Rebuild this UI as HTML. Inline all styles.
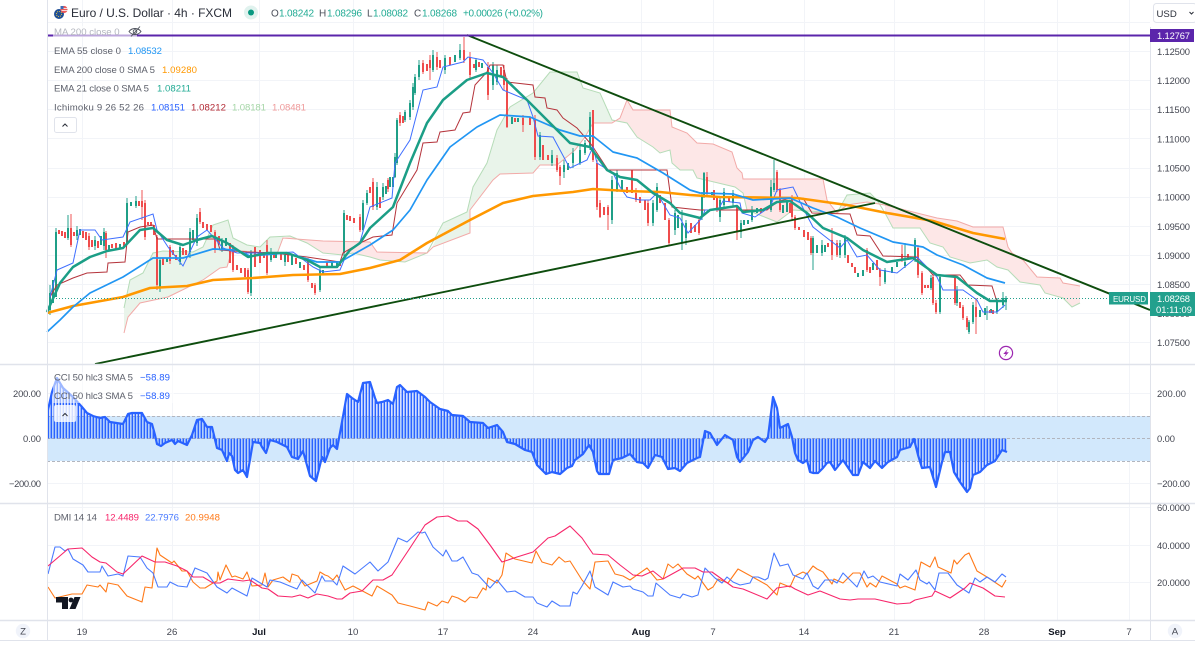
<!DOCTYPE html>
<html lang="en"><head><meta charset="utf-8"><title>EURUSD chart</title>
<style>
html,body{margin:0;padding:0;background:#fff;width:1195px;height:645px;overflow:hidden}
svg{display:block}
text{font-family:"Liberation Sans",sans-serif;font-size:9.6px;fill:#5d606b}
.ax{font-size:9.4px;fill:#434651}
.t{font-size:9.6px;fill:#434651;text-anchor:middle}
.b{font-weight:bold;fill:#131722}
.v{fill:#22ab94;font-size:10px}
.l{fill:#4a4e59;font-size:10px}
.g{fill:none;stroke:#f2f4f8;stroke-width:1}
</style></head><body>
<svg width="1195" height="645" viewBox="0 0 1195 645" xmlns="http://www.w3.org/2000/svg">
<defs>
<pattern id="st" width="3" height="10" patternUnits="userSpaceOnUse" x="47.5"><rect width="1.7" height="10" fill="#2962ff"/></pattern>
<path id="cci" d="M48 410L52 392L57 378L63 388L73 397L82 407L87 413L93 416L100 418L105 417L110 422L123 424L128 414L132 413L142 413L147 422L152 424L155 435L157 444L161 446L165 443L172 440L175 444L178 441L187 445L192 435L197 420L202 419L207 427L212 427L217 448L222 450L227 461L229 453L232 456L235 470L238 473L243 470L247 477L253 442L260 443L262 447L266 453L270 440L277 442L287 447L292 457L298 459L303 451L310 476L316 481L322 457L325 462L330 448L333 445L337 449L342 422L347 394L352 398L358 402L363 383L370 382L375 398L377 403L382 402L388 400L393 404L397 387L400 385L407 392L417 391L425 397L430 402L440 409L448 411L452 415L463 416L470 422L483 423L488 428L497 425L503 432L507 442L515 444L525 450L532 452L537 465L546 474L552 472L560 474L567 468L572 466L575 460L583 454L589 445L593 452L597 471L599 474L609 474L613 460L622 458L630 454L637 462L643 463L648 468L655 455L662 457L668 469L675 468L680 471L687 463L697 458L700 457L705 431L710 433L717 445L725 435L733 440L737 457L740 462L748 452L753 440L758 437L765 442L768 437L773 397L777 408L780 428L788 424L792 437L795 453L798 460L803 463L807 460L810 472L813 473L818 473L823 468L827 463L830 462L835 470L843 460L853 475L858 475L863 462L870 468L875 461L882 468L888 462L897 457L900 450L910 447L914 439L918 455L922 468L930 467L936 487L942 462L945 452L950 452L954 472L960 482L967 492L970 488L973 475L980 472L987 465L995 461L1002 450L1007 452"/>
</defs>
<rect width="1195" height="645" fill="#fff"/>

<!-- grid -->
<path class="g" d="M47 22.5H1150M47 51.5H1150M47 80.5H1150M47 109.5H1150M47 138.5H1150M47 168.5H1150M47 197.5H1150M47 226.5H1150M47 255.5H1150M47 284.5H1150M47 313.5H1150M47 342.5H1150M47 393.5H1150M47 483.5H1150M47 507.5H1150M47 545.5H1150M47 582.5H1150M82.5 0V620M172.5 0V620M259.5 0V620M353.5 0V620M443.5 0V620M533.5 0V620M641.5 0V620M713.5 0V620M804.5 0V620M894.5 0V620M984.5 0V620M1057.5 0V620M1129.5 0V620"/>

<!-- Ichimoku cloud fills -->
<g stroke="none">
<path fill="#e9f4ea" d="M124 308L130 280L143 273L153 253L163 251L193 252L203 247L213 225L228 220L233 238L247 245L260 247L270 237L283 236L283 238L277 254L253 252L232 250L227 267L220 268L203 280L172 295L168 297L140 303L128 317L124 333Z"/>
<path fill="#fde7e7" d="M283 238L323 241L370 242L377 252L427 253L431 250L427 253L405 262L380 260L370 257L353 253L343 255L323 253L307 243L290 236Z"/>
<path fill="#e9f4ea" d="M431 250L443 223L467 212L473 187L487 163L497 130L510 107L533 93L550 72L577 72L583 88L600 93L612 120L612 123L593 123L585 137L575 150L557 165L540 165L533 173L500 174L493 180L470 210L470 233L433 247Z"/>
<path fill="#fde7e7" d="M612 123L620 118L627 100L633 110L670 110L672 127L687 133L697 143L713 144L732 152L737 168L742 173L743 179L823 179L827 200L837 213L793 210L777 222L767 218L747 210L743 193L735 187L697 178L693 170L680 170L672 163L670 150L660 153L653 147L637 137L627 123L612 120Z"/>
<path fill="#e9f4ea" d="M837 213L847 195L870 193L877 200L885 205L867 202L847 205Z"/>
<path fill="#fde7e7" d="M885 205L937 218L957 221L973 227L1003 227L1008 247L1012 253L1023 260L1037 277L1060 278L1063 283L1080 286L1080 303L1072 307L1063 298L1045 293L1040 285L1020 282L1008 270L997 267L987 260L970 263L950 257L943 247L930 243L920 228L893 228L885 213Z"/>
</g>
<!-- Senkou A / B -->
<g fill="none" stroke-width="1">
<path stroke="#b6dcb8" d="M124 308L130 280L143 273L153 253L163 251L193 252L203 247L213 225L228 220L233 238L247 245L260 247L270 237L290 236L307 243L323 253L343 255L353 253L370 257L380 260L405 262L427 253L443 223L467 212L473 187L487 163L497 130L510 107L533 93L550 72L577 72L583 88L600 93L612 120L627 123L637 137L653 147L660 153L670 150L672 163L680 170L693 170L697 178L735 187L743 193L747 210L767 218L777 222L793 210L837 213L847 195L870 193L877 200L885 213L893 228L920 228L930 243L943 247L950 257L970 263L987 260L997 267L1008 270L1020 282L1040 285L1045 293L1063 298L1072 307L1080 303"/>
<path stroke="#f2aaa8" d="M124 333L128 317L140 303L168 297L172 295L203 280L220 268L227 267L232 250L253 252L277 254L283 238L323 241L370 242L377 252L427 253L433 247L470 233L470 210L493 180L500 174L533 173L540 165L557 165L575 150L585 137L593 123L612 123L620 118L627 100L633 110L670 110L672 127L687 133L697 143L713 144L732 152L737 168L742 173L743 179L823 179L827 200L837 213L847 205L867 202L885 205L937 218L957 221L973 227L1003 227L1008 247L1012 253L1023 260L1037 277L1060 278L1063 283L1080 286"/>
</g>

<!-- candle wicks -->
<path fill="none" stroke="#26a08c" stroke-width="1" d="M50 285V315M56 228V297M68 215V240M77 226V240M95 236V250M104 228V250M127 198V245M136 196V208M160 258V292M180 245V265M190 228V258M197 214V246M222 238V252M251 250V296M271 248V262M285 252V266M320 266V292M344 210V256M363 200V232M367 190V205M377 182V210M383 183V200M395 153V178M397 118V165M405 110V122M410 100V120M413 83V110M415 74V95M419 60V80M433 50V72M445 55V74M460 44V60M476 58V72M493 62V90M497 65V85M540 132V160M552 150V166M564 160V178M573 148V168M580 145V165M585 140V155M590 112V150M612 176V224M617 170V192M653 200V226M657 183V212M675 210V235M682 210V250M686 220V245M702 192V220M704 172V198M720 197V222M724 188V208M733 190V206M741 220V238M752 206V222M771 180V212M774 160V192M813 236V270M822 240V256M840 240V258M845 235V258M885 268V284M905 243V268M915 238V262M931 275V290M940 274V314M957 286V306M969 320V334M973 302V324M987 306V320M997 298V314M1003 292V308M1006 296V310"/>
<path fill="none" stroke="#ef5555" stroke-width="1" d="M71 214V247M89 233V250M106 231V258M142 190V220M145 200V240M157 235V290M170 245V264M200 208V224M215 230V253M233 245V272M248 268V294M267 240V275M308 258V282M315 283V295M360 214V232M373 178V210M388 178V192M400 112V126M423 60V74M430 55V80M437 52V70M464 37V63M470 52V80M488 62V100M504 65V90M507 78V128M523 115V132M535 115V160M557 155V172M560 165V185M593 110V162M597 160V210M600 200V218M608 205V230M636 188V202M648 200V226M669 218V245M699 218V235M707 172V195M717 196V212M737 205V240M777 170V192M780 188V212M792 195V220M795 215V230M811 236V255M832 228V260M837 240V257M867 248V272M880 268V286M902 245V262M918 245V278M922 271V295M933 275V305M936 300V314M955 275V305M963 305V320M967 316V330M976 298V334"/>

<!-- candle bodies -->
<path fill="none" stroke="#1f9f87" stroke-width="2" d="M50 293V310M53 280V303M56 232V297M68 228V238M77 230V236M80 229V235M95 240V246M101 236V245M104 232V246M109 245V250M120 244V248M127 203V243M131 202V206M136 201V206M160 260V288M167 258V262M180 247V262M190 232V252M193 230V240M197 218V243M222 240V250M226 238V246M251 253V293M271 252V260M276 253V258M285 255V262M292 255V265M300 262V268M320 270V290M323 270V275M332 262V268M337 262V268M344 213V253M363 203V230M367 193V203M377 187V207M383 187V197M386 186V194M390 177V187M393 177V187M395 157V177M397 120V163M405 112V120M410 103V117M413 87V107M415 77V93M419 65V77M433 55V70M445 58V70M455 55V62M460 50V58M476 60V70M482 63V68M493 65V85M497 70V82M512 117V124M518 118V122M540 135V157M552 155V163M564 165V172M568 163V170M573 153V163M580 150V163M585 143V153M590 117V147M612 180V220M617 173V190M622 180V190M653 203V223M657 187V210M675 213V230M678 215V228M682 223V243M686 223V238M702 197V217M704 173V197M712 192V195M720 200V217M724 192V205M733 193V203M741 223V232M744 220V225M748 220V224M752 210V220M757 208V213M771 187V210M774 183V190M783 205V213M787 202V212M813 238V253M817 245V253M822 245V253M825 245V252M840 243V255M845 238V255M858 273V277M863 270V276M873 263V270M885 270V282M892 267V273M897 262V267M905 262V266M911 257V258M915 240V258M931 278V288M940 277V312M957 290V303M969 322V332M973 305V322M980 310V317M985 308V315M991 309V313M997 300V312M1003 298V305M1006 298V302"/>
<path fill="none" stroke="#ef4c4c" stroke-width="2" d="M59 230V234M62 231V236M65 232V238M71 228V245M74 232V236M83 231V238M86 232V240M89 236V247M92 240V247M98 241V248M106 233V250M112 244V248M116 243V249M124 242V247M139 201V206M142 201V207M145 203V237M148 222V225M151 222V226M154 225V235M157 237V285M163 258V265M170 247V261M173 250V255M176 255V260M183 248V255M186 250V255M200 212V222M203 222V228M207 224V230M211 225V232M215 232V250M219 236V244M230 243V263M233 247V270M237 265V270M241 268V273M245 268V277M248 270V292M255 247V267M260 250V263M264 252V258M267 245V273M274 253V258M281 252V260M288 255V262M296 258V264M304 265V270M308 260V280M312 283V288M315 285V293M327 262V266M340 262V266M347 215V220M350 216V221M354 218V223M360 217V230M370 187V193M373 182V207M380 197V208M388 180V189M400 115V123M403 116V123M423 63V72M427 64V71M430 60V68M437 57V67M440 60V68M450 57V65M464 50V60M470 57V75M474 64V68M479 62V67M488 67V95M501 67V76M504 70V85M507 80V127M515 118V122M523 118V125M530 117V125M535 120V157M543 145V160M548 155V160M557 158V170M560 167V176M593 110V160M597 163V207M600 203V217M604 207V215M608 207V215M627 187V193M632 170V193M636 193V200M640 197V203M645 200V210M648 203V223M660 195V203M665 203V220M669 220V243M691 223V233M695 225V232M699 220V233M707 177V193M714 190V200M717 198V210M729 197V202M737 207V232M761 208V213M777 172V190M780 190V210M790 203V213M792 197V217M795 217V228M799 227V230M804 230V237M808 232V240M811 238V253M828 243V247M832 240V255M837 243V255M848 255V263M852 263V267M855 267V273M867 250V270M870 267V273M877 260V270M880 270V277M902 254V260M908 254V260M918 248V275M922 273V293M925 285V288M928 285V288M933 277V303M936 303V312M955 277V303M960 302V308M963 307V318M967 318V327M976 307V317M990 310V313M993 310V314"/>

<!-- Ichimoku tenkan/kijun -->
<path fill="none" stroke="#b5343c" stroke-width="1" d="M50 297L57 285L73 278L87 273L107 272L108 263L125 262L128 232L140 227L153 225L157 239L217 239L220 250L247 252L273 253L307 257L340 262L343 253L360 243L373 237L392 235L397 203L417 170L423 143L437 142L440 132L455 130L463 113L470 112L475 85L487 72L490 65L503 65L507 82L533 85L535 97L545 98L547 108L557 110L563 118L577 128L590 143L593 147L608 170L667 170L672 207L690 209L700 210L767 210L777 202L790 198L803 198L812 213L850 214L857 235L870 236L883 256L917 257L933 275L960 275L968 285L992 286L997 302"/>
<path fill="none" stroke="#3f6fff" stroke-width="1" d="M50 297L57 270L73 263L80 230L95 230L102 240L123 237L130 222L153 214L157 230L168 247L183 266L197 237L207 230L223 248L237 253L277 253L293 252L313 267L323 272L340 270L347 253L360 242L370 207L392 198L395 163L410 140L423 90L437 87L443 67L463 62L468 57L483 60L493 73L503 90L527 100L533 117L538 136L553 137L567 163L570 168L587 160L593 147L597 163L613 173L620 187L627 197L640 200L650 200L657 193L670 215L680 218L688 233L702 218L705 210L718 210L723 201L740 203L742 213L755 217L770 207L777 190L793 187L803 208L813 227L827 238L840 248L847 240L857 257L867 255L880 270L897 273L917 257L937 277L943 290L963 290L977 300L983 312L997 312L1005 305"/>

<!-- EMAs -->
<path fill="none" stroke="#ff9800" stroke-width="2.6" stroke-linejoin="round" d="M47 313L73 306L123 297L150 288L187 286L213 280L253 278L293 275L340 274L370 268L400 260L427 243L470 220L503 203L533 196L573 192L593 189L627 191L660 192L690 195L720 197L797 198L847 205L887 213L933 221L973 233L1005 239"/>
<path fill="none" stroke="#2196f3" stroke-width="1.7" stroke-linejoin="round" d="M47 332L60 320L73 307L90 293L123 277L153 258L183 258L213 249L237 250L250 256L287 253L317 262L340 262L370 245L393 230L410 210L427 180L450 147L477 127L500 115L530 117L560 130L580 136L593 136L613 152L637 158L663 173L690 190L700 193L733 194L753 200L790 198L813 208L837 217L860 228L893 242L923 247L937 255L963 265L987 278L1005 283"/>
<path fill="none" stroke="#1b9e86" stroke-width="2.5" stroke-linejoin="round" d="M47 312L60 283L73 267L90 257L107 251L123 248L140 230L153 228L167 240L183 245L197 240L212 236L227 243L248 257L267 253L287 253L307 260L320 267L337 267L350 250L360 243L370 228L393 207L410 163L427 123L443 100L467 80L487 73L503 77L527 100L550 123L570 143L590 147L607 170L620 177L637 180L653 193L670 203L680 213L700 218L710 210L737 206L743 212L763 210L777 202L790 201L807 213L823 228L847 238L863 250L887 262L913 258L937 275L957 277L977 293L990 301L1007 301"/>

<!-- Trend lines -->
<path fill="none" stroke="#0e4d0e" stroke-width="1.9" d="M467 35L1150 310M95 364L875 203"/>
<path fill="none" stroke="#5b25ab" stroke-width="2" d="M47 35.5H1150"/>

<!-- current price dotted -->
<path fill="none" stroke="#22a08d" stroke-width="1" stroke-dasharray="1 2" d="M47 298.5H1110"/>

<!-- bolt -->
<circle cx="1006" cy="353" r="6.6" fill="#fff" stroke="#9c27b0" stroke-width="1.2"/>
<path fill="#9c27b0" d="M1007.8 349L1003.3 354H1005.8L1004.3 357.3L1008.8 352.3H1006.2Z"/>

<!-- CCI pane -->
<rect x="47" y="416" width="1103" height="45" fill="#d2e8fc"/>
<path fill="none" stroke="#b2b5be" stroke-width="1" stroke-dasharray="3 2" d="M47 416.5H1150M47 461.5H1150M47 438.5H1150"/>
<path fill="url(#st)" d="M48 438.5L48 410L52 392L57 378L63 388L73 397L82 407L87 413L93 416L100 418L105 417L110 422L123 424L128 414L132 413L142 413L147 422L152 424L155 435L157 444L161 446L165 443L172 440L175 444L178 441L187 445L192 435L197 420L202 419L207 427L212 427L217 448L222 450L227 461L229 453L232 456L235 470L238 473L243 470L247 477L253 442L260 443L262 447L266 453L270 440L277 442L287 447L292 457L298 459L303 451L310 476L316 481L322 457L325 462L330 448L333 445L337 449L342 422L347 394L352 398L358 402L363 383L370 382L375 398L377 403L382 402L388 400L393 404L397 387L400 385L407 392L417 391L425 397L430 402L440 409L448 411L452 415L463 416L470 422L483 423L488 428L497 425L503 432L507 442L515 444L525 450L532 452L537 465L546 474L552 472L560 474L567 468L572 466L575 460L583 454L589 445L593 452L597 471L599 474L609 474L613 460L622 458L630 454L637 462L643 463L648 468L655 455L662 457L668 469L675 468L680 471L687 463L697 458L700 457L705 431L710 433L717 445L725 435L733 440L737 457L740 462L748 452L753 440L758 437L765 442L768 437L773 397L777 408L780 428L788 424L792 437L795 453L798 460L803 463L807 460L810 472L813 473L818 473L823 468L827 463L830 462L835 470L843 460L853 475L858 475L863 462L870 468L875 461L882 468L888 462L897 457L900 450L910 447L914 439L918 455L922 468L930 467L936 487L942 462L945 452L950 452L954 472L960 482L967 492L970 488L973 475L980 472L987 465L995 461L1002 450L1007 452L1007 438.5Z"/>
<use href="#cci" fill="none" stroke="#2962ff" stroke-width="2.2" stroke-linejoin="round"/>

<!-- DMI -->
<g fill="none" stroke-width="1.1" stroke-linejoin="round">
<path stroke="#ff7a1a" d="M48 587L55 598L72 594L82 594L87 585L98 587L100 585L106 592L108 583L118 585L127 596L142 602L145 587L152 588L157 548L160 555L172 563L174 561L182 571L187 571L193 582L200 588L205 588L213 583L217 581L218 572L220 580L226 565L232 577L235 576L243 579L247 572L252 586L262 585L265 573L268 587L273 580L283 577L290 582L292 574L298 576L305 586L317 581L320 572L325 575L328 576L333 580L337 575L345 590L353 586L372 596L377 586L392 595L398 603L410 606L425 610L428 602L437 606L442 601L448 603L452 596L458 598L465 602L470 597L477 598L483 588L486 590L488 578L497 583L502 575L506 553L515 559L532 563L536 551L542 562L552 565L559 557L565 562L570 561L582 580L590 589L595 562L608 561L615 574L623 576L630 580L647 568L657 580L663 579L668 564L673 568L678 564L687 574L695 579L698 576L708 590L713 587L718 579L728 583L738 569L767 585L777 595L780 583L790 587L795 576L803 572L807 574L813 566L817 569L823 572L832 584L834 579L843 583L853 573L860 573L867 587L870 583L876 587L882 576L897 584L900 588L905 586L915 590L921 562L930 567L935 557L938 567L951 573L954 560L957 564L965 555L969 553L977 571L987 577L1002 587L1006 580"/>
<path stroke="#4a7bff" d="M48 574L55 547L60 547L65 551L68 549L73 559L83 565L88 572L100 572L102 566L108 576L118 574L123 576L128 556L140 557L147 568L153 573L158 587L167 587L170 582L178 586L187 587L195 568L207 573L217 587L227 593L232 588L247 596L252 578L267 587L270 580L280 582L297 589L302 580L315 593L322 576L325 581L333 581L337 585L343 566L355 574L370 562L378 571L388 562L398 538L407 542L418 532L422 533L425 532L433 547L443 556L446 550L452 561L457 561L463 557L472 573L478 575L490 588L497 580L507 592L515 591L525 597L533 597L537 603L547 607L552 601L560 606L570 606L573 592L577 594L582 586L590 571L595 587L608 595L613 582L623 587L630 586L633 589L643 592L648 596L653 596L656 583L670 595L680 598L683 594L692 597L698 595L705 568L715 578L722 583L727 577L733 582L740 585L750 583L753 577L758 577L765 580L768 578L774 553L780 566L788 564L793 575L803 579L807 573L813 586L818 589L825 580L832 580L837 583L843 573L857 587L864 571L868 578L873 576L880 582L897 586L900 574L908 580L916 570L920 580L927 584L929 582L935 590L939 573L948 573L957 585L969 593L975 578L980 582L987 577L995 582L1002 574L1006 577"/>
<path stroke="#f7266b" d="M48 566L68 549L82 548L92 557L100 562L106 563L117 572L123 574L142 556L155 562L165 562L177 566L187 571L193 577L203 577L213 583L220 583L228 579L243 581L250 580L262 588L268 589L278 596L292 597L300 595L308 598L317 594L328 596L337 599L342 599L350 593L362 591L373 580L383 580L392 575L400 563L410 548L425 525L437 517L448 516L458 521L467 521L478 529L490 545L502 562L517 557L533 552L548 538L555 536L570 526L582 538L593 554L608 555L620 565L633 575L642 576L653 571L663 579L683 568L695 568L703 572L712 572L733 587L743 589L767 599L777 588L790 586L795 589L808 595L820 591L840 599L850 600L858 599L875 599L897 604L910 603L915 600L932 596L935 591L950 598L965 588L970 583L983 588L995 596L1005 597"/>
</g>
<!-- TV logo -->
<path fill="#131722" d="M56 597H68V609H62V602.5H56ZM80.5 597H74.5L69.5 609H75.5Z"/>
<circle cx="71" cy="600" r="2.4" fill="#131722"/>

<!-- frame lines -->
<path fill="none" stroke="#e0e3eb" stroke-width="1" d="M47.5 0V641M1150.5 27V641M0 640.5H1195"/>
<path fill="none" stroke="#e0e3eb" stroke-width="1.6" d="M0 364.5H1195M0 503.5H1195M0 620.5H1195"/>

<!-- header -->
<rect x="0" y="0" width="47" height="27" fill="#fff"/>
<circle cx="59" cy="14" r="5" fill="#1f4e96"/>
<circle cx="59" cy="14" r="2.6" fill="none" stroke="#e9c53c" stroke-width=".9" stroke-dasharray="1 1"/>
<circle cx="64" cy="9.5" r="3.6" fill="#ea5a5a"/>
<path stroke="#fff" stroke-width=".8" d="M61 8.5H68M61.5 10.5H67.5"/>
<rect x="60.5" y="6" width="3" height="3" fill="#3c6bb5"/>
<text x="71" y="17" style="font-size:12px;fill:#2a2e39" textLength="161" lengthAdjust="spacing">Euro / U.S. Dollar · 4h · FXCM</text>
<circle cx="251" cy="12.5" r="7" fill="#e0f2ee"/>
<circle cx="251" cy="12.5" r="3" fill="#089981"/>
<text class="l" x="271" y="16.5">O</text><text class="v" x="279" y="16.5" textLength="35">1.08242</text>
<text class="l" x="319" y="16.5">H</text><text class="v" x="327" y="16.5" textLength="35">1.08296</text>
<text class="l" x="367" y="16.5">L</text><text class="v" x="373" y="16.5" textLength="35">1.08082</text>
<text class="l" x="414" y="16.5">C</text><text class="v" x="422" y="16.5" textLength="35">1.08268</text>
<text class="v" x="463" y="16.5" textLength="80">+0.00026 (+0.02%)</text>

<!-- USD button -->
<rect x="1153.5" y="3.5" width="43" height="19" rx="3" fill="#fff" stroke="#e0e3eb"/>
<text x="1156.5" y="17" style="font-size:9.6px;fill:#2a2e39">USD</text>
<path fill="none" stroke="#2a2e39" stroke-width="1" d="M1189.5 12L1191.5 14L1193.5 12"/>

<!-- legend -->
<rect x="53" y="26" width="84" height="11" fill="#fff" fill-opacity=".6"/>
<text x="54" y="35" style="fill:#b2b5be">MA 200 close 0</text>
<g fill="none" stroke="#4a4e59" stroke-width=".9"><path d="M129 31.5C132 27.5 138 27.5 141 31.5C138 35.5 132 35.5 129 31.5Z"/><circle cx="135" cy="31.5" r="1.8"/><path d="M131 36.5L140 26.5"/></g>
<text x="54" y="54" textLength="67">EMA 55 close 0</text><text x="128" y="54" style="fill:#2196f3" textLength="34">1.08532</text>
<text x="54" y="73" textLength="101">EMA 200 close 0 SMA 5</text><text x="162" y="73" style="fill:#ff9800" textLength="35">1.09280</text>
<text x="54" y="91.5" textLength="95">EMA 21 close 0 SMA 5</text><text x="157" y="91.5" style="fill:#22ab94" textLength="34">1.08211</text>
<text x="54" y="110.5" textLength="90">Ichimoku 9 26 52 26</text><text x="151" y="110.5" style="fill:#2962ff" textLength="34">1.08151</text><text x="191" y="110.5" style="fill:#b22833" textLength="35">1.08212</text><text x="232" y="110.5" style="fill:#a5d6a7" textLength="34">1.08181</text><text x="272" y="110.5" style="fill:#ef9a9a" textLength="34">1.08481</text>
<rect x="54.5" y="117.5" width="22" height="15" rx="2" fill="#fff" stroke="#e0e3eb"/>
<path fill="none" stroke="#2a2e39" stroke-width="1" d="M62.5 126.5L65 124L67.5 126.5"/>

<!-- CCI legend -->
<rect x="53" y="372" width="121" height="31" fill="#fff" fill-opacity=".55"/>
<text x="54" y="380.5" textLength="79">CCI 50 hlc3 SMA 5</text><text x="140" y="380.5" style="fill:#2962ff" textLength="30">−58.89</text>
<text x="54" y="399" textLength="79">CCI 50 hlc3 SMA 5</text><text x="140" y="399" style="fill:#2962ff" textLength="30">−58.89</text>
<rect x="54" y="405" width="22" height="17" rx="2" fill="#fff" fill-opacity=".8"/>
<path fill="none" stroke="#2a2e39" stroke-width="1" d="M62.5 416L65 413.5L67.5 416"/>

<!-- DMI legend -->
<text x="54" y="520.5" textLength="43">DMI 14 14</text><text x="105" y="520.5" style="fill:#f7266b" textLength="34">12.4489</text><text x="145" y="520.5" style="fill:#4a7bff" textLength="34">22.7976</text><text x="185" y="520.5" style="fill:#ff7a1a" textLength="35">20.9948</text>

<!-- price axis -->
<g>
<text class="ax" x="1157" y="55" textLength="33">1.12500</text>
<text class="ax" x="1157" y="84" textLength="33">1.12000</text>
<text class="ax" x="1157" y="113" textLength="33">1.11500</text>
<text class="ax" x="1157" y="142.5" textLength="33">1.11000</text>
<text class="ax" x="1157" y="171.5" textLength="33">1.10500</text>
<text class="ax" x="1157" y="200.5" textLength="33">1.10000</text>
<text class="ax" x="1157" y="230" textLength="33">1.09500</text>
<text class="ax" x="1157" y="259" textLength="33">1.09000</text>
<text class="ax" x="1157" y="288" textLength="33">1.08500</text>
<text class="ax" x="1157" y="317" textLength="33">1.08000</text>
<text class="ax" x="1157" y="346" textLength="33">1.07500</text>
<text class="ax" x="1157" y="397" textLength="29">200.00</text>
<text class="ax" x="1157" y="442" textLength="18">0.00</text>
<text class="ax" x="1157" y="487" textLength="33">−200.00</text>
<text class="ax" x="1157" y="511" textLength="33">60.0000</text>
<text class="ax" x="1157" y="549" textLength="33">40.0000</text>
<text class="ax" x="1157" y="586" textLength="33">20.0000</text>
<text class="ax" x="13" y="397" textLength="28">200.00</text>
<text class="ax" x="23" y="442" textLength="18">0.00</text>
<text class="ax" x="9" y="487" textLength="32">−200.00</text>
</g>

<!-- price labels -->
<rect x="1150" y="29" width="44" height="13" fill="#5b25ab"/>
<text x="1157" y="39" style="font-size:9.4px;fill:#fff" textLength="33">1.12767</text>
<rect x="1109" y="292" width="39" height="12.5" fill="#22a08d"/>
<text x="1113" y="301.8" style="font-size:8px;fill:#fff" textLength="33">EURUSD</text>
<rect x="1150" y="292" width="45" height="24" fill="#22a08d"/>
<text x="1157" y="302" style="font-size:9.4px;fill:#fff" textLength="33">1.08268</text>
<text x="1156" y="313" style="font-size:9.4px;fill:#fff" textLength="36">01:11:09</text>

<!-- time axis -->
<circle cx="23" cy="631" r="7.2" fill="#f0f3fa"/><text x="23" y="634.5" class="t">Z</text>
<circle cx="1175" cy="631" r="7.2" fill="#f0f3fa"/><text x="1175" y="634.5" class="t">A</text>
<text x="82" y="635" class="t">19</text>
<text x="172" y="635" class="t">26</text>
<text x="259" y="635" class="t b">Jul</text>
<text x="353" y="635" class="t">10</text>
<text x="443" y="635" class="t">17</text>
<text x="533" y="635" class="t">24</text>
<text x="641" y="635" class="t b">Aug</text>
<text x="713" y="635" class="t">7</text>
<text x="804" y="635" class="t">14</text>
<text x="894" y="635" class="t">21</text>
<text x="984" y="635" class="t">28</text>
<text x="1057" y="635" class="t b">Sep</text>
<text x="1129" y="635" class="t">7</text>
</svg>
</body></html>
